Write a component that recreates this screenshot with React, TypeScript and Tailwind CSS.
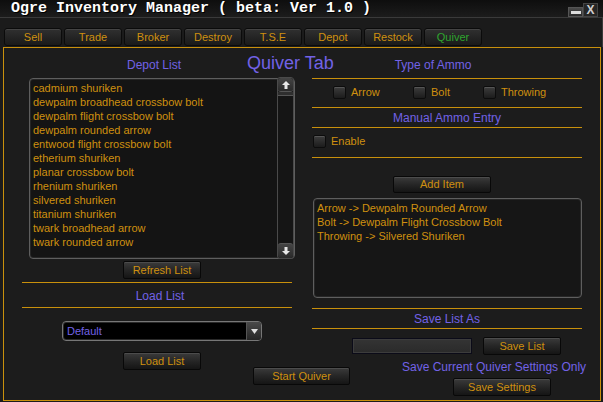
import React from "react";

const ORANGE = "text-[#cf900f]";

function Btn({ children, className = "" }: { children: React.ReactNode; className?: string }) {
  return (
    <div
      className={`flex shrink-0 items-center justify-center rounded-[2px] border border-[#080808] bg-gradient-to-b from-[#3b3b3b] via-[#262626] to-[#151515] text-[11px] leading-none text-[#cf900f] shadow-[inset_0_1px_0_#4c4c4c] ${className}`}
    >
      {children}
    </div>
  );
}

function Check() {
  return (
    <div className="h-[13px] w-[13px] shrink-0 rounded-[2px] border border-[#0c0c0c] bg-gradient-to-b from-[#3d3d3d] to-[#1c1c1c] shadow-[inset_0_1px_0_#555]" />
  );
}

function Line() {
  return <div className="h-px w-[270px] bg-[#c8900c]" />;
}

const tabs = ["Sell", "Trade", "Broker", "Destroy", "T.S.E", "Depot", "Restock", "Quiver"];

const depotItems = [
  "cadmium shuriken",
  "dewpalm broadhead crossbow bolt",
  "dewpalm flight crossbow bolt",
  "dewpalm rounded arrow",
  "entwood flight crossbow bolt",
  "etherium shuriken",
  "planar crossbow bolt",
  "rhenium shuriken",
  "silvered shuriken",
  "titanium shuriken",
  "twark broadhead arrow",
  "twark rounded arrow",
];

const ammo = [
  "Arrow -> Dewpalm Rounded Arrow",
  "Bolt -> Dewpalm Flight Crossbow Bolt",
  "Throwing -> Silvered Shuriken",
];

export default function App() {
  return (
    <div className="relative h-[402px] w-[603px] overflow-hidden bg-[#1b1b1b] font-['Liberation_Sans',Arial,sans-serif]">
      {/* Title bar */}
      <div className="flex h-[18px] items-start justify-between border-b border-[#3a3a3a] bg-gradient-to-b from-[#0e0e0e] to-[#1c1c1c]">
        <div className="pl-[11px] pt-[1px] font-['Liberation_Mono',monospace] text-[15px] font-bold leading-[16px] text-white [text-shadow:1px_1px_0_#000]">
          Ogre Inventory Manager ( beta: Ver 1.0 )
        </div>
        <div className="flex items-end pr-[5px] pt-[3px]">
          <div className="flex h-[10px] w-[15px] items-center justify-center border border-[#555] bg-gradient-to-b from-[#4a4a4a] to-[#2a2a2a]">
            <div className="h-[3px] w-[10px] bg-[#ddd]" />
          </div>
          <div className="flex h-[14px] w-[15px] items-center justify-center border border-[#444] bg-[#262626] text-[12px] font-bold leading-none text-[#cfcfcf]">
            X
          </div>
        </div>
      </div>

      {/* Tabs strip */}
      <div className="flex h-[29px] items-end border-r border-[#3a3a3a] pl-[4px] pb-[1px]">
        <div className="flex gap-[2px]">
          {tabs.map((t) => (
            <div
              key={t}
              className={`flex h-[18px] w-[58px] items-center justify-center rounded-[3px] border border-[#0b0b0b] bg-gradient-to-b from-[#303030] to-[#1a1a1a] text-[11px] leading-none shadow-[inset_0_1px_0_#444] ${
                t === "Quiver" ? "text-[#2fa52f]" : "text-[#cf900f]"
              }`}
            >
              {t}
            </div>
          ))}
        </div>
      </div>

      {/* Main panel */}
      <div className="ml-[3px] h-[354px] w-[598px] border border-[#c8900c] bg-[#1c1c1c]">
        {/* header row */}
        <div className="flex h-[30px]">
          <div className="w-[243px] pl-[57px] pt-[10px] text-center text-[12px] leading-[14px] text-[#7262e6]">
            Depot List
          </div>
          <div className="w-[100px] pt-[5px] text-[18px] leading-[20px] text-[#7262e6]">Quiver Tab</div>
          <div className="w-[172px] pt-[10px] text-center text-[12px] leading-[14px] text-[#7262e6]">
            Type of Ammo
          </div>
        </div>

        {/* body */}
        <div className="flex">
          {/* left column */}
          <div className="flex w-[291px] flex-col">
            <div className="ml-[25px] flex h-[181px] w-[266px] rounded-[4px] border border-[#5e5e5e] bg-[#141414] shadow-[inset_0_0_0_1px_#262626]">
              <div className={`flex-1 pl-[3px] pt-[2px] text-[11px] leading-[14px] ${ORANGE}`}>
                {depotItems.map((i) => (
                  <div key={i} className="h-[14px] whitespace-nowrap">
                    {i}
                  </div>
                ))}
              </div>
              <div className="-mt-[2px] -mb-[1px] flex w-[17px] flex-col rounded-[3px] border border-[#4a4a4a] bg-[#181818]">
                <div className="flex h-[14px] items-center justify-center rounded-[3px] border-b border-[#555] bg-gradient-to-b from-[#444] to-[#2a2a2a]">
                  <svg width="8" height="8" viewBox="0 0 8 8">
                    <path d="M4 0 L8 4 L5.5 4 L5.5 8 L2.5 8 L2.5 4 L0 4 Z" fill="#e8e8e8" />
                  </svg>
                </div>
                <div className="h-[4px] border-b border-[#555] bg-[#2e2e2e]" />
                <div className="flex-1 bg-[#151515]" />
                <div className="flex h-[15px] items-center justify-center rounded-[3px] border-t border-[#555] bg-gradient-to-b from-[#444] to-[#2a2a2a]">
                  <svg width="8" height="8" viewBox="0 0 8 8">
                    <path d="M4 8 L8 4 L5.5 4 L5.5 0 L2.5 0 L2.5 4 L0 4 Z" fill="#e8e8e8" />
                  </svg>
                </div>
              </div>
            </div>

            <Btn className="ml-[119px] mt-[2px] h-[18px] w-[78px]">Refresh List</Btn>

            <div className="ml-[18px] mt-[3px]">
              <Line />
            </div>
            <div className="ml-[18px] mt-[6px] w-[270px] pl-[6px] text-center text-[12px] leading-[14px] text-[#7262e6]">
              Load List
            </div>
            <div className="ml-[18px] mt-[4px]">
              <Line />
            </div>

            <div className="ml-[58px] mt-[13px] flex h-[20px] w-[200px] rounded-[4px] border border-[#777] bg-black shadow-[inset_0_0_0_1px_#2a2a2a]">
              <div className="flex-1 pl-[4px] text-[11px] leading-[18px] text-[#7262e6]">Default</div>
              <div className="flex w-[15px] items-center justify-center rounded-r-[3px] border-l border-[#555] bg-gradient-to-b from-[#4a4a4a] to-[#262626]">
                <svg width="7" height="5" viewBox="0 0 7 5">
                  <path d="M0 0 L7 0 L3.5 5 Z" fill="#e0e0e0" />
                </svg>
              </div>
            </div>

            <div className="flex">
              <Btn className="ml-[119px] mt-[11px] h-[18px] w-[78px]">Load List</Btn>
              <Btn className="ml-[52px] mt-[26px] h-[18px] w-[97px]">Start Quiver</Btn>
            </div>
          </div>

          {/* right column */}
          <div className="ml-[17px] flex w-[270px] flex-col">
            <Line />
            <div className={`mt-[6px] flex h-[14px] items-center text-[11px] ${ORANGE}`}>
              <div className="ml-[21px] flex w-[80px] items-center gap-[5px]">
                <Check />
                <span>Arrow</span>
              </div>
              <div className="flex w-[70px] items-center gap-[5px]">
                <Check />
                <span>Bolt</span>
              </div>
              <div className="flex items-center gap-[5px]">
                <Check />
                <span>Throwing</span>
              </div>
            </div>
            <div className="mt-[8px]">
              <Line />
            </div>
            <div className="mt-[3px] text-center text-[12px] leading-[14px] text-[#7262e6]">Manual Ammo Entry</div>
            <div className="mt-[2px]">
              <Line />
            </div>
            <div className={`ml-[1px] mt-[7px] flex h-[13px] items-center gap-[5px] text-[11px] ${ORANGE}`}>
              <Check />
              <span>Enable</span>
            </div>
            <div className="mt-[9px]">
              <Line />
            </div>

            <Btn className="ml-[81px] mt-[18px] h-[17px] w-[98px]">Add Item</Btn>

            <div
              className={`ml-[1px] mt-[5px] h-[100px] w-[269px] rounded-[4px] border border-[#5e5e5e] bg-[#161616] pl-[3px] pt-[2px] text-[11px] leading-[14px] shadow-[inset_0_0_0_1px_#262626] ${ORANGE}`}
            >
              {ammo.map((a) => (
                <div key={a} className="h-[14px] whitespace-nowrap">
                  {a}
                </div>
              ))}
            </div>

            <div className="mt-[10px]">
              <Line />
            </div>
            <div className="mt-[3px] text-center text-[12px] leading-[14px] text-[#7262e6]">Save List As</div>
            <div className="mt-[2px]">
              <Line />
            </div>

            <div className="mt-[8px] flex">
              <div className="ml-[40px] mt-[1px] h-[16px] w-[120px] border border-[#0b0b18] bg-gradient-to-b from-[#343434] to-[#2a2a2a] shadow-[inset_0_0_0_1px_#3c3c3c]" />
              <Btn className="ml-[11px] h-[18px] w-[78px]">Save List</Btn>
            </div>

            <div className="ml-[90px] mt-[5px] whitespace-nowrap text-[12px] leading-[14px] text-[#7262e6]">
              Save Current Quiver Settings Only
            </div>

            <Btn className="ml-[141px] mt-[4px] h-[18px] w-[98px]">Save Settings</Btn>
          </div>
        </div>
      </div>
    </div>
  );
}
